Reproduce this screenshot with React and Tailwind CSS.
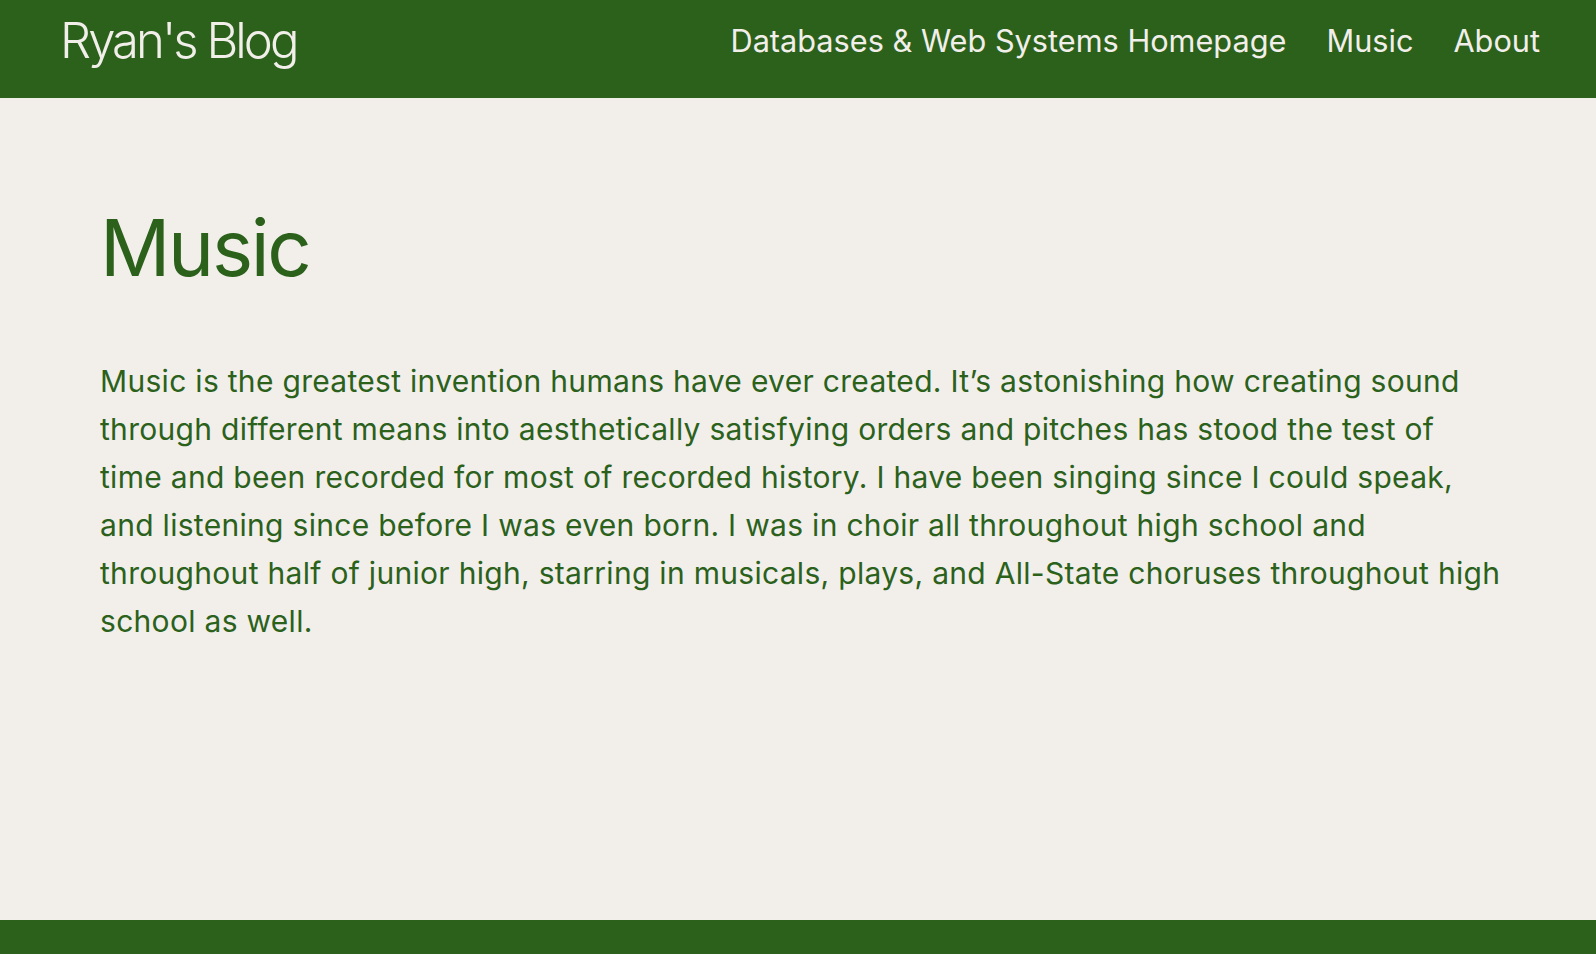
export default function App() {
    return (
        <div className="min-h-screen flex flex-col bg-[#f2efeb] font-['Inter',sans-serif]">
            <header className="h-[98px] bg-[#2b611b] flex justify-between items-center pl-[60px] pr-[56px] pb-[16px] text-[#f2efeb]">
                <div className="text-[49px] font-light tracking-[-0.06em]">Ryan's Blog</div>
                <nav className="flex gap-[40px] text-[30.7px]">
                    <a href="#">Databases &amp; Web Systems Homepage</a>
                    <a href="#">Music</a>
                    <a href="#">About</a>
                </nav>
            </header>

            <main className="flex-1 pl-[100px] pr-[92px] pt-[111px] text-[#2b611b]">
                <h1 className="text-[78px] leading-none tracking-[-0.03em]">Music</h1>
                <p className="mt-[70px] text-[30px] leading-[48px] tracking-[0.01em]">
                    Music is the greatest invention humans have ever created. It’s astonishing how creating sound through different means into aesthetically satisfying orders and pitches has stood the test of time and been recorded for most of recorded history. I have been singing since I could speak, and listening since before I was even born. I was in choir all throughout high school and throughout half of junior high, starring in musicals, plays, and All-State choruses throughout high school as well.
                </p>
            </main>

            <footer className="h-[34px] bg-[#2b611b]" />
        </div>
    );
}
